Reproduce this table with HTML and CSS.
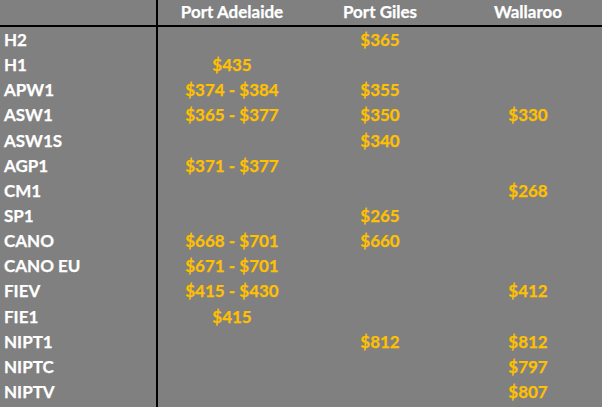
FILE: index.html
```html
<!DOCTYPE html>
<html>
<head>
<meta charset="utf-8">
<link rel="stylesheet" href="styles.css">
</head>
<body>
<div class="sheet">
  <div class="hd lab"></div><div class="hd">Port Adelaide</div><div class="hd">Port Giles</div><div class="hd">Wallaroo</div>

  <div class="lab">H2</div><div class="v"></div><div class="v">$365</div><div class="v"></div>
  <div class="lab">H1</div><div class="v">$435</div><div class="v"></div><div class="v"></div>
  <div class="lab">APW1</div><div class="v">$374 - $384</div><div class="v">$355</div><div class="v"></div>
  <div class="lab">ASW1</div><div class="v">$365 - $377</div><div class="v">$350</div><div class="v">$330</div>
  <div class="lab">ASW1S</div><div class="v"></div><div class="v">$340</div><div class="v"></div>
  <div class="lab">AGP1</div><div class="v">$371 - $377</div><div class="v"></div><div class="v"></div>
  <div class="lab">CM1</div><div class="v"></div><div class="v"></div><div class="v">$268</div>
  <div class="lab">SP1</div><div class="v"></div><div class="v">$265</div><div class="v"></div>
  <div class="lab">CANO</div><div class="v">$668 - $701</div><div class="v">$660</div><div class="v"></div>
  <div class="lab">CANO EU</div><div class="v">$671 - $701</div><div class="v"></div><div class="v"></div>
  <div class="lab">FIEV</div><div class="v">$415 - $430</div><div class="v"></div><div class="v">$412</div>
  <div class="lab">FIE1</div><div class="v">$415</div><div class="v"></div><div class="v"></div>
  <div class="lab">NIPT1</div><div class="v"></div><div class="v">$812</div><div class="v">$812</div>
  <div class="lab">NIPTC</div><div class="v"></div><div class="v"></div><div class="v">$797</div>
  <div class="lab">NIPTV</div><div class="v"></div><div class="v"></div><div class="v">$807</div>
  <div class="lab"></div><div></div><div></div><div></div>
</div>
</body>
</html>
```
FILE: styles.css
```css
html, body {
  margin: 0;
  padding: 0;
  background: #808080;
}
body {
  width: 602px;
  height: 407px;
  overflow: hidden;
  font-family: "Lato", "Liberation Sans", sans-serif;
  font-weight: 700;
  font-size: 17px;
}
.sheet {
  display: grid;
  grid-template-columns: 158px 148px 148px 148px;
  grid-template-rows: 27px repeat(15, 25.15px) 1fr;
  height: 407px;
}
.sheet > div {
  display: flex;
  align-items: center;
  white-space: nowrap;
  -webkit-text-stroke: 0.25px currentColor;
}
.hd {
  color: #ffffff;
  justify-content: center;
  border-bottom: 2px solid #000;
  padding-bottom: 2px;
}
.lab {
  color: #ffffff;
  padding-left: 4px;
  border-right: 2px solid #000;
}
.v {
  color: #ffc000;
  justify-content: center;
}
```
